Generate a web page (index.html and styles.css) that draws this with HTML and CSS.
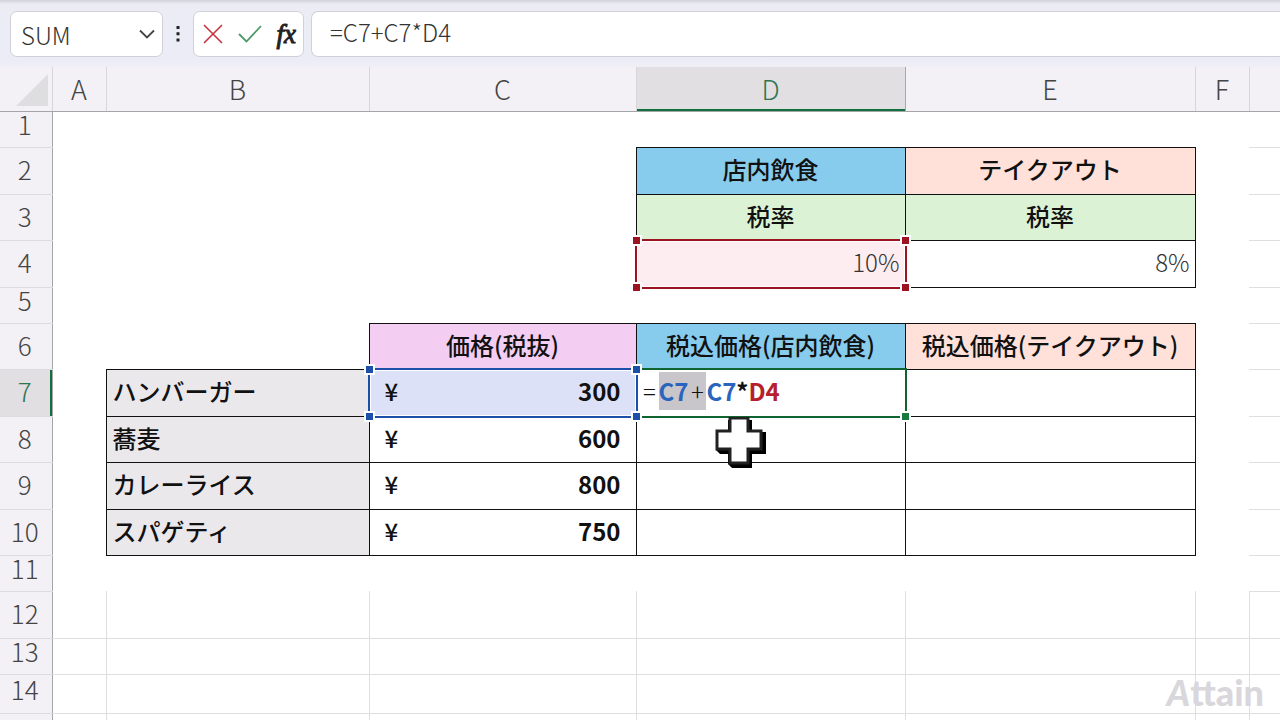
FILE: index.html
```
<!DOCTYPE html>
<html lang="ja">
<head>
  <meta charset="UTF-8" />
  <meta name="viewport" content="width=device-width, initial-scale=1.0"/>
  <title>税込価格</title>
  <link rel="stylesheet" href="styles.css">
</head>
<body>
  <div class="formula-bar">
    <div class="name-box">
      <input type="text" class="name-input" aria-label="名前ボックス" value="SUM">
      <button class="icon-btn" aria-label="名前の一覧">
        <svg width="16" height="10" viewBox="0 0 16 10"><path d="M1 1.5 L8 8.5 L15 1.5" fill="none" stroke="#444" stroke-width="1.8"/></svg>
      </button>
    </div>
    <svg class="dots" width="4" height="16" viewBox="0 0 4 16"><path d="M.5 0h3v3h-3zM.5 6.300h3v3h-3zM.5 12.500h3v3h-3z" fill="#222"/></svg>
    <div class="actions">
      <button class="icon-btn" aria-label="キャンセル">
        <svg width="20" height="20" viewBox="0 0 20 20"><path d="M1 1 L19 19 M19 1 L1 19" fill="none" stroke="#c8323c" stroke-width="1.600"/></svg>
      </button>
      <button class="icon-btn" aria-label="入力">
        <svg width="24" height="18" viewBox="0 0 24 18"><path d="M1 9 L8.500 16.500 L23 1" fill="none" stroke="#4c9a68" stroke-width="1.800"/></svg>
      </button>
      <button class="icon-btn fx" aria-label="関数の挿入"><i>fx</i></button>
    </div>
    <input type="text" class="formula-input" aria-label="数式バー" value="=C7+C7*D4">
  </div>

  <div class="sheet">
    <table>
      <colgroup>
        <col class="col-head"><col class="col-s"><col class="col-b"><col class="col-c">
        <col class="col-d"><col class="col-e"><col class="col-s"><col>
      </colgroup>
      <thead>
        <tr>
          <th class="corner"><svg width="32" height="32" viewBox="0 0 32 32"><path d="M32 0V32H0Z" fill="#dedde0"/></svg></th>
          <th>A</th><th>B</th><th>C</th><th class="active">D</th><th>E</th><th>F</th><th></th>
        </tr>
      </thead>
      <tbody>
        <tr class="short"><th>1</th><td></td><td></td><td></td><td></td><td></td><td></td><td class="line"></td></tr>
        <tr>
          <th>2</th><td></td><td></td><td></td>
          <td class="cell title blue">店内飲食</td>
          <td class="cell title peach">テイクアウト</td>
          <td></td><td class="line"></td>
        </tr>
        <tr class="mid">
          <th>3</th><td></td><td></td><td></td>
          <td class="cell title green">税率</td>
          <td class="cell title green">税率</td>
          <td></td><td class="line"></td>
        </tr>
        <tr>
          <th>4</th><td></td><td></td><td></td>
          <td class="cell rate ref-red">10%
            <span class="range red"><i class="tl"></i><i class="tr"></i><i class="bl"></i><i class="br"></i></span>
          </td>
          <td class="cell rate">8%</td>
          <td></td><td class="line"></td>
        </tr>
        <tr class="short"><th>5</th><td></td><td></td><td></td><td></td><td></td><td></td><td class="line"></td></tr>
        <tr class="mid">
          <th>6</th><td></td><td></td>
          <td class="cell title pink">価格(税抜)</td>
          <td class="cell title blue">税込価格(店内飲食)</td>
          <td class="cell title peach">税込価格(テイクアウト)</td>
          <td></td><td class="line"></td>
        </tr>
        <tr>
          <th class="active">7</th><td></td>
          <td class="cell name">ハンバーガー</td>
          <td class="cell ref-blue">
            <div class="price"><span class="yen">¥</span><span>300</span></div>
            <span class="range navy"><i class="tl"></i><i class="tr"></i><i class="bl"></i><i class="br"></i></span>
          </td>
          <td class="cell edit">
            <span class="edit-frame"><i></i></span>
            <div class="formula"><span class="op">=</span><span class="picked"><b class="c-blue">C7</b><span class="op">+</span></span><b class="c-blue">C7</b><b>*</b><b class="c-red">D4</b></div>
          </td>
          <td class="cell"></td><td></td><td class="line"></td>
        </tr>
        <tr class="mid">
          <th>8</th><td></td>
          <td class="cell name">蕎麦</td>
          <td class="cell"><div class="price"><span class="yen">¥</span><span>600</span></div></td>
          <td class="cell has-cursor">
            <svg class="cursor" width="52" height="52" viewBox="0 0 52 52">
              <path d="M17 3H37V15H51V37H37V51H17L13 47V37H5L1 33V15H13V3Z" fill="#000"/>
              <path d="M15 1H33V14H46V32H33V46H15V32H2V14H15Z" fill="#fff" stroke="#222" stroke-width="3"/>
            </svg>
          </td>
          <td class="cell"></td><td></td><td class="line"></td>
        </tr>
        <tr>
          <th>9</th><td></td>
          <td class="cell name">カレーライス</td>
          <td class="cell"><div class="price"><span class="yen">¥</span><span>800</span></div></td>
          <td class="cell"></td><td class="cell"></td><td></td><td class="line"></td>
        </tr>
        <tr class="mid">
          <th>10</th><td></td>
          <td class="cell name">スパゲティ</td>
          <td class="cell"><div class="price"><span class="yen">¥</span><span>750</span></div></td>
          <td class="cell"></td><td class="cell"></td><td></td><td class="line"></td>
        </tr>
        <tr class="short"><th>11</th><td></td><td></td><td></td><td></td><td></td><td></td><td class="line"></td></tr>
        <tr class="grid"><th>12</th><td></td><td></td><td></td><td></td><td></td><td></td><td></td></tr>
        <tr class="grid short"><th>13</th><td></td><td></td><td></td><td></td><td></td><td></td><td></td></tr>
        <tr class="grid short last"><th>14</th><td></td><td></td><td></td><td></td><td></td><td></td><td></td></tr>
        <tr class="grid"><th></th><td></td><td></td><td></td><td></td><td></td><td></td><td></td></tr>
      </tbody>
    </table>
  </div>

  <div class="watermark"><span>A</span>ttain</div>
</body>
</html>
```

FILE: styles.css
```
* {
  box-sizing: border-box;
}
body {
  margin: 0;
  height: 100vh;
  display: flex;
  flex-direction: column;
  overflow: hidden;
  background: #fff;
  color: #111;
  font-family: 'Noto Sans CJK JP', sans-serif;
}
button, input {
  font: inherit;
  color: inherit;
  border: none;
  background: none;
  padding: 0;
  outline: none;
}

/* Formula bar */
.formula-bar {
  display: flex;
  align-items: center;
  height: 67px;
  flex: none;
  padding: 0 0 0 10px;
  background: linear-gradient(#cfd2d8 0, #ebecf4 4px, #ebecf6 60px, #f0eff6 67px);
}
.name-box, .actions, .formula-input {
  height: 46px;
  background: #fff;
  border: 1px solid #d3cfd8;
  border-radius: 7px;
}
.name-box {
  display: flex;
  align-items: center;
  width: 153px;
  padding: 0 7px 0 10px;
}
.name-input {
  flex: 1;
  min-width: 0;
  padding-top: 2px;
  font-size: 24px;
  font-weight: 300;
  color: #333;
}
.icon-btn {
  display: flex;
  align-items: center;
  cursor: pointer;
}
.dots {
  margin: 0 13px;
}
.actions {
  display: flex;
  align-items: center;
  justify-content: space-between;
  width: 111px;
  padding: 0 7px 0 9px;
  margin-right: 7px;
}
.fx {
  font-family: 'Liberation Serif', serif;
  font-size: 27px;
  line-height: 30px;
  color: #222;
  -webkit-text-stroke: 1px #222;
}
.formula-input {
  flex: 1;
  min-width: 0;
  padding: 0 0 4px 18px;
  border-right: none;
  border-radius: 7px 0 0 7px;
  font-size: 24px;
  font-weight: 300;
  color: #333;
}

/* Sheet */
.sheet {
  flex: 1;
  min-height: 0;
  overflow: hidden;
}
table {
  width: 100%;
  table-layout: fixed;
  border-collapse: collapse;
}
.col-head { width: 52px; }
.col-s { width: 54px; }
.col-b { width: 263px; }
.col-c { width: 267px; }
.col-d { width: 269px; }
.col-e { width: 290px; }
tr {
  height: 47px;
}
.mid { height: 46px; }
.short { height: 36px; }
.last { height: 39px; }
th, td {
  padding: 0 0 3px;
  line-height: 26px;
}
thead tr {
  height: 44px;
}
thead th {
  padding: 0;
  background: #f3f1f5;
  border-right: 1px solid #d8d6da;
  border-bottom: 1px solid #a5a4a7;
  font-size: 27px;
  font-weight: 300;
  color: #444;
}
thead th:last-child, .grid td:last-child {
  border-right: none;
}
thead .active {
  background: #e1dfe2;
  border-right-color: #aaa8ac;
  box-shadow: inset 0 -2px #10703f;
  color: #2f7552;
}
.corner {
  text-align: right;
  vertical-align: top;
}
.corner svg {
  display: block;
  margin: 7px 4px 0 auto;
}
tbody th {
  padding-right: 2px;
  background: #f3f1f5;
  border-right: 1px solid #a5a4a7;
  border-bottom: 1px solid #dddbdf;
  font-size: 26px;
  font-weight: 300;
  color: #444;
}
tbody .active {
  background: #e1dfe2;
  box-shadow: inset -2px 0 #10703f;
  color: #2f7552;
}
.short th {
  padding-bottom: 10px;
  line-height: 24px;
}
.line {
  border-bottom: 1px solid #dfdee0;
}
.grid td {
  border-right: 1px solid #dfdee0;
  border-bottom: 1px solid #dfdee0;
}

/* Cells */
.cell {
  border: 1px solid #111;
  font-size: 24px;
}
.title {
  text-align: center;
  font-weight: 500;
}
.blue { background: #87cbed; }
.peach { background: #ffe1d9; }
.green { background: #dcf2d5; }
.pink { background: #f3cdf2; }
.rate {
  padding-right: 5px;
  text-align: right;
  font-weight: 300;
  color: #333;
}
.name {
  padding-left: 6px;
  background: #ebe8ec;
  font-weight: 500;
}
.price {
  display: flex;
  justify-content: space-between;
  padding: 0 15px;
  font-weight: bold;
}
.yen {
  font-weight: 500;
}
.ref-red, .ref-blue, .edit, .has-cursor {
  position: relative;
}
.ref-red { background: #fdedf1; }
.ref-blue { background: #dce1f8; }

/* Reference frames with corner handles */
.range {
  position: absolute;
  inset: -2px;
  border: 2px solid currentColor;
  box-shadow: inset 0 0 0 1px #fff;
  z-index: 2;
}
.red { color: #9c1420; }
.navy { color: #1c4fa8; }
.range i, .edit-frame i {
  position: absolute;
  width: 11px;
  height: 11px;
  border: 2px solid #fff;
  background: currentColor;
}
.tl { top: -6px; left: -6px; }
.tr { top: -6px; right: -6px; }
.bl { bottom: -6px; left: -6px; }
.br { bottom: -6px; right: -6px; }
.edit-frame {
  position: absolute;
  inset: -2px;
  border: 2px solid #10642f;
  color: #1b7a40;
  z-index: 1;
}
.edit-frame i {
  right: -6px;
  bottom: -6px;
}
.formula {
  display: flex;
  padding-left: 4px;
  line-height: 38px;
}
.op {
  font-weight: 300;
  width: 18px;
  text-align: center;
}
.picked {
  display: flex;
  background: #c8c6ca;
}
.c-blue { color: #2b64bd; }
.c-red { color: #b5202c; }
.cursor {
  position: absolute;
  top: 0;
  left: 78px;
  z-index: 3;
}

.watermark {
  position: absolute;
  right: 16px;
  bottom: 8px;
  font-family: Lato, sans-serif;
  font-size: 36px;
  font-weight: 900;
  line-height: 40px;
  color: #d9d7dc;
}
.watermark span {
  font-style: italic;
}
```
